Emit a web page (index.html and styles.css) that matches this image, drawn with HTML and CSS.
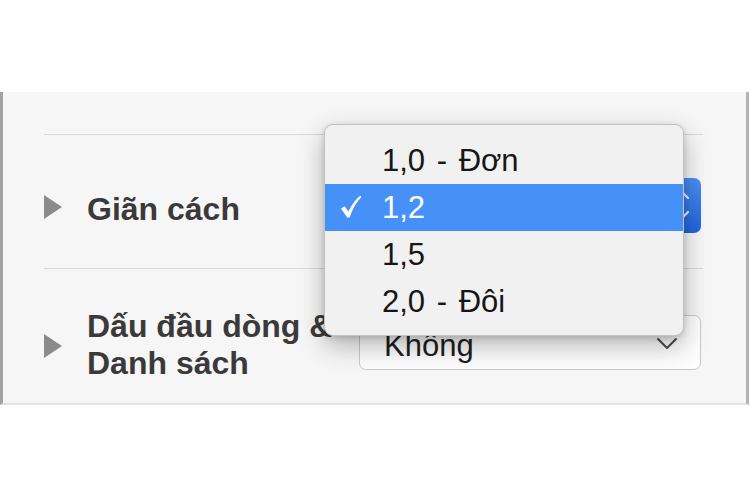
FILE: index.html
```html
<!DOCTYPE html>
<html lang="vi">
<head>
<meta charset="utf-8">
<link rel="stylesheet" href="styles.css">
</head>
<body>
<div class="panel">
  <div class="section s1">
    <div class="label l1"><span class="tri"></span><span class="text">Giãn cách</span></div>
    <div class="popup blue">
      <svg class="updown" width="20" height="34" viewBox="0 0 20 34"><polyline points="4,10 10,4 16,10" fill="none" stroke="#e9f0ff" stroke-width="2.4" stroke-linecap="round" stroke-linejoin="round"/><polyline points="4,24 10,30 16,24" fill="none" stroke="#e9f0ff" stroke-width="2.4" stroke-linecap="round" stroke-linejoin="round"/></svg>
    </div>
  </div>
  <div class="section s2">
    <div class="label l2"><span class="tri"></span><span class="text">Dấu đầu dòng &amp;<br>Danh sách</span></div>
    <div class="popup plain">
      <span class="value">Không</span>
      <svg class="chev" width="22" height="14" viewBox="0 0 22 14"><polyline points="2,2 11,11 20,2" fill="none" stroke="#4a4a4a" stroke-width="2" stroke-linecap="round" stroke-linejoin="round"/></svg>
    </div>
  </div>
  <div class="menu">
    <div class="item">1,0 - Đơn</div>
    <div class="item selected"><svg class="check" width="22" height="24" viewBox="0 0 22 24"><path d="M1 13.5 L4.6 11.2 L8.4 16.6 C11.5 10 15.5 4.5 20.2 0.8 L21.4 2 C16.6 7 12.6 13.8 9.6 22.6 L7.2 22.6 Z" fill="#ffffff"/></svg>1,2</div>
    <div class="item">1,5</div>
    <div class="item">2,0 - Đôi</div>
  </div>
</div>
</body>
</html>
```
FILE: styles.css
```css
html, body {
  margin: 0;
  padding: 0;
  background: #ffffff;
}
body {
  width: 750px;
  height: 500px;
  overflow: hidden;
  font-family: "Liberation Sans", Arial, sans-serif;
}
.panel {
  position: relative;
  box-sizing: border-box;
  margin-top: 92px;
  width: 749px;
  height: 313px;
  background: #f6f6f6;
  border-left: 3px solid #a2a2a2;
  border-right: 3px solid #b4b4b4;
  border-bottom: 2px solid #e3e3e3;
  padding: 42px 43px 0 41px;
  display: flex;
  flex-direction: column;
}
.section {
  box-sizing: border-box;
  border-top: 1px solid #dadada;
  display: flex;
  align-items: center;
  justify-content: space-between;
}
.s1 {
  height: 134px;
  padding-top: 7px;
}
.s2 {
  flex: 1;
  padding-top: 14px;
}
.label {
  display: flex;
  align-items: center;
  color: #3a3a3a;
  font-weight: 700;
  font-size: 32px;
  line-height: 37px;
}
.l1 {
  padding-top: 8px;
}
.l2 {
  padding-top: 4px;
}
.tri {
  width: 0;
  height: 0;
  border-left: 18px solid #8b8b8b;
  border-top: 12px solid transparent;
  border-bottom: 12px solid transparent;
  margin-left: 0;
  margin-right: 25px;
}
.l1 .tri {
  margin-top: -4px;
}
.l2 .tri {
  margin-top: 2px;
}
.popup {
  box-sizing: border-box;
  width: 342px;
  height: 55px;
  margin-right: 2px;
  border-radius: 7px;
  display: flex;
  align-items: center;
  justify-content: space-between;
}
.blue {
  background: linear-gradient(#4b8ff4, #2262dc);
  justify-content: flex-end;
  padding-right: 9px;
}
.updown {
  display: block;
}
.plain {
  background: #fdfdfd;
  border: 1px solid #c9c9c9;
  padding: 0 22px 0 24px;
  margin-top: -1px;
}
.value {
  font-size: 31px;
  color: #1e1e1e;
  margin-top: 7px;
}
.chev {
  display: block;
  margin-top: 2px;
}
.menu {
  position: absolute;
  left: 321px;
  top: 32px;
  box-sizing: border-box;
  width: 360px;
  height: 212px;
  padding-top: 12px;
  background: #f1f1f1;
  border: 1px solid #c2c2c2;
  border-radius: 9px;
  box-shadow: 0 10px 26px rgba(0, 0, 0, 0.28), 0 2px 6px rgba(0, 0, 0, 0.14);
  overflow: hidden;
}
.item {
  position: relative;
  height: 47px;
  line-height: 47px;
  padding-left: 57px;
  font-size: 31px;
  word-spacing: 3px;
  color: #161616;
}
.selected {
  background: #4591f7;
  color: #ffffff;
}
.check {
  position: absolute;
  left: 15px;
  top: 11px;
}
```
